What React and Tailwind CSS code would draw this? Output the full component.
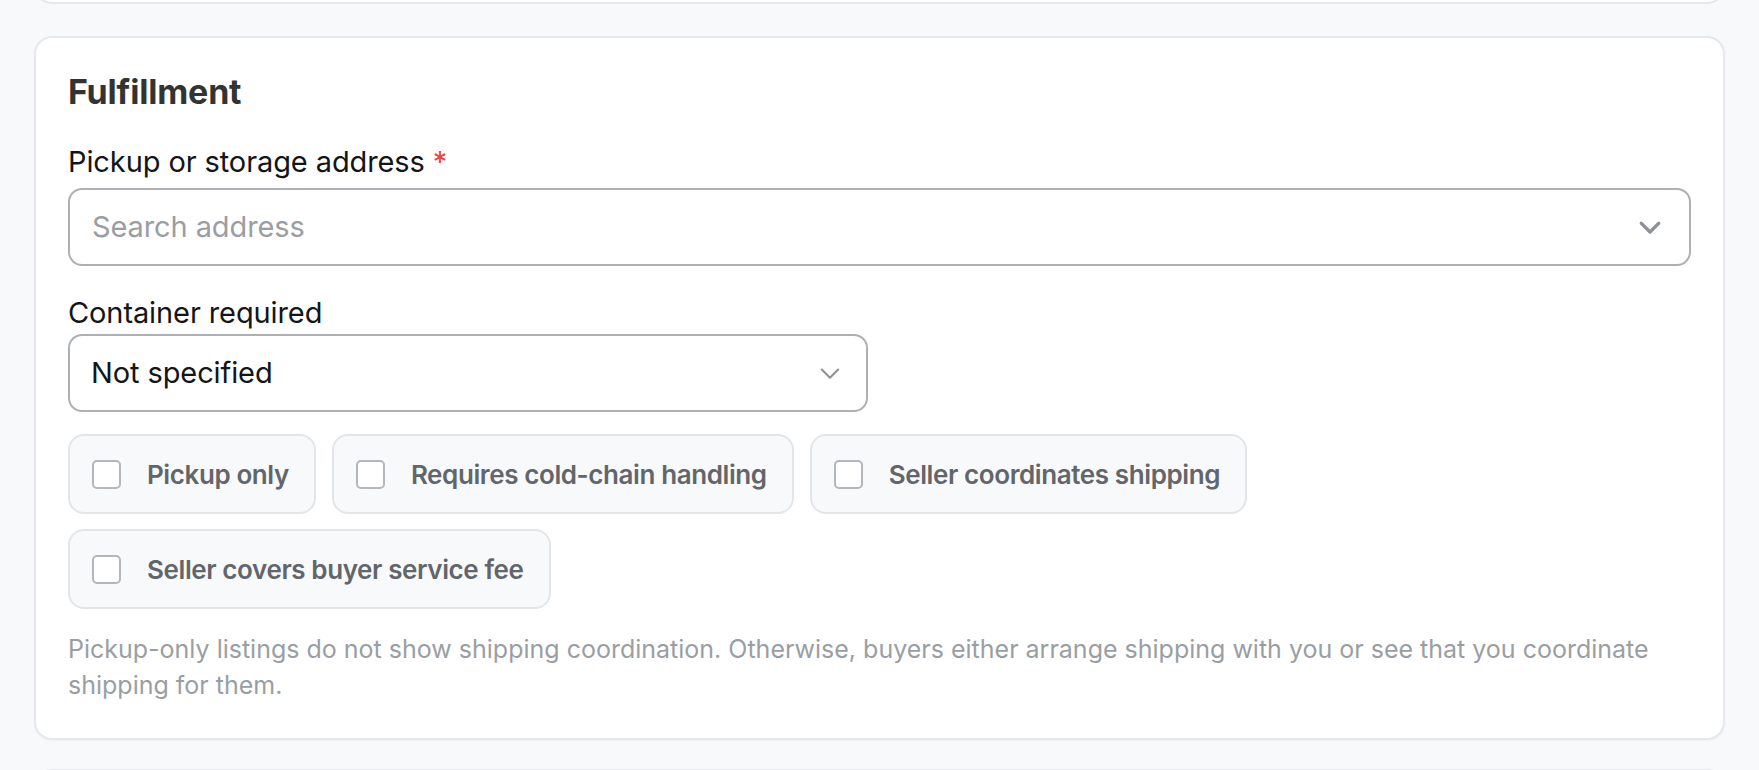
import { useState } from "react"

const font = { fontFamily: "Inter, 'Noto Sans', sans-serif" }

function Chevron({ className }) {
  return (
    <svg viewBox="0 0 24 24" fill="none" stroke="currentColor" strokeLinecap="round" strokeLinejoin="round" className={className}>
      <path d="M5 9l7 7 7-7" />
    </svg>
  )
}

function Chip({ label, checked, onToggle }) {
  return (
    <label className="flex h-[80px] cursor-pointer items-center gap-[26px] rounded-[16px] border-2 border-[#e3e6e9] bg-[#f8f9fb] pl-[22px] pr-[25px]">
      <span
        onClick={onToggle}
        className={`h-[29px] w-[29px] rounded-[5px] border-2 ${checked ? "border-[#2f6fed] bg-[#2f6fed]" : "border-[#b3b7bc] bg-white"}`}
      />
      <span className="text-[26px] font-semibold tracking-[-0.4px] text-[#62666b]">{label}</span>
    </label>
  )
}

export default function App() {
  const [flags, setFlags] = useState({})
  const [container, setContainer] = useState("Not specified")

  const toggle = (k) => setFlags({ ...flags, [k]: !flags[k] })

  return (
    <div style={font} className="min-h-screen overflow-hidden bg-[#f8f9fa] px-[34px]">
      <div className="flex flex-col gap-[32px]">
        {/* previous section, only its bottom edge shows */}
        <div className="-mt-[40px] h-[44px] rounded-[18px] border-2 border-[#e6e8eb] bg-white" />

        <section className="rounded-[18px] border-2 border-[#e6e8eb] bg-white px-[32px] pt-[30px] pb-[35px] shadow-[0_1px_2px_rgba(0,0,0,0.04)]">
          <h2 className="text-[34px] font-bold leading-[48px] tracking-[-0.2px] text-[#333432]">Fulfillment</h2>

          <div className="mt-[26px]">
            <div className="text-[29px] leading-[40px] tracking-[-0.1px] text-[#141517]">
              Pickup or storage address <span className="text-[#ef4444]">*</span>
            </div>
            <div className="mt-[6px] flex h-[78px] items-center justify-between rounded-[14px] border-2 border-[#adb1b5] bg-white pl-[22px] pr-[24px]">
              <input
                placeholder="Search address"
                className="w-full bg-transparent text-[29px] tracking-[-0.1px] text-[#141517] outline-none placeholder:text-[#9a9ea3]"
              />
              <Chevron className="h-[30px] w-[30px] shrink-0 stroke-[2.6] text-[#8e9297]" />
            </div>
          </div>

          <div className="mt-[27px] grid grid-cols-2 gap-[24px]">
            <div>
              <div className="text-[29px] leading-[40px] tracking-[-0.1px] text-[#141517]">Container required</div>
              <div className="relative mt-[1px]">
                <select
                  value={container}
                  onChange={(e) => setContainer(e.target.value)}
                  className="h-[78px] w-full appearance-none rounded-[14px] border-2 border-[#adb1b5] bg-white pl-[21px] text-[29px] tracking-[-0.1px] text-[#141517] outline-none"
                >
                  <option>Not specified</option>
                  <option>20ft</option>
                  <option>40ft</option>
                  <option>Reefer</option>
                </select>
                <Chevron className="pointer-events-none absolute right-[24px] top-1/2 h-[28px] w-[28px] -translate-y-1/2 stroke-[1.8] text-[#8e9297]" />
              </div>
            </div>
          </div>

          <div className="mt-[22px] flex flex-wrap gap-x-[16px] gap-y-[15px]">
            {[
              "Pickup only",
              "Requires cold-chain handling",
              "Seller coordinates shipping",
              "Seller covers buyer service fee",
            ].map((l) => (
              <Chip key={l} label={l} checked={!!flags[l]} onToggle={() => toggle(l)} />
            ))}
          </div>

          <p className="mt-[22px] text-[25px] leading-[36px] text-[#9a9ea3]">
            Pickup-only listings do not show shipping coordination. Otherwise, buyers either arrange shipping with you or see that you coordinate shipping for them.
          </p>
        </section>

        {/* next section, only its top edge shows */}
        <div className="-mt-[3px] h-[60px] rounded-[18px] border-2 border-[#e6e8eb] bg-white" />
      </div>
    </div>
  )
}
